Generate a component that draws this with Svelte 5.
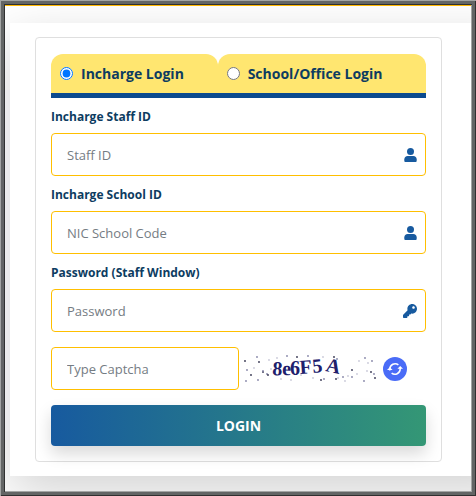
<script>
  let loginType = $state('incharge');

  const tabs = [
    { value: 'incharge', label: 'Incharge Login' },
    { value: 'school', label: 'School/Office Login' }
  ];

  const fields = [
    { id: 'staff-id', label: 'Incharge Staff ID', placeholder: 'Staff ID', type: 'text', icon: 'user' },
    { id: 'school-id', label: 'Incharge School ID', placeholder: 'NIC School Code', type: 'text', icon: 'user' },
    { id: 'password', label: 'Password (Staff Window)', placeholder: 'Password', type: 'password', icon: 'key' }
  ];

  // captcha noise: x, y, tone
  const specks = [
    [1, 6, 0], [3, 15, 1], [7, 20, 0], [2, 26, 1], [13, 2, 1], [15, 7, 0], [19, 17, 0],
    [23, 19, 1], [25, 5, 2], [14, 25, 1], [19, 16, 1], [27, 14, 2], [24, 20, 0], [33, 3, 2],
    [43, 1, 1], [53, 2, 0], [57, 20, 2], [64, 1, 1], [69, 23, 2], [77, 25, 0], [80, 24, 1],
    [79, 2, 2], [90, 2, 0], [93, 4, 1], [92, 24, 0], [94, 23, 2], [99, 22, 1], [104, 21, 2],
    [108, 15, 0], [108, 22, 1], [101, 26, 2], [115, 6, 2], [121, 3, 1], [124, 8, 2],
    [127, 17, 0], [128, 6, 1], [130, 19, 1], [131, 23, 0], [120, 26, 1], [123, 16, 2],
    [10, 13, 2], [37, 24, 2], [47, 25, 2], [113, 19, 2]
  ];
  const tones = ['#34344f', '#8585a8', '#c9c9d8'];
</script>

<div class="frame">
  <div class="page">
    <main class="card">
      <form class="panel" onsubmit={(e) => e.preventDefault()}>
        <div class="tabs">
          {#each tabs as tab}
            <label class="tab">
              <input type="radio" name="login-type" value={tab.value} bind:group={loginType} />
              <span>{tab.label}</span>
            </label>
          {/each}
        </div>

        {#each fields as field}
          <label class="field-label" for={field.id}>{field.label}</label>
          <div class="field">
            <input id={field.id} type={field.type} placeholder={field.placeholder} />
            {#if field.icon === 'user'}
              <svg class="field-icon" viewBox="0 0 14 14" aria-hidden="true">
                <circle cx="7.500" cy="3.6" r="3.5" />
                <path d="M4.700 8h5.600c2 0 3.400 1.500 3.400 3.400v1.300c0 .8-.5 1.300-1.300 1.300H2.600c-.8 0-1.300-.5-1.300-1.300v-1.300C1.300 9.500 2.700 8 4.700 8z" />
              </svg>
            {:else}
              <svg class="field-icon" viewBox="0 0 512 512" aria-hidden="true">
                <path d="M512 176c0 97-79 176-176 176-11 0-22-1-33-3l-24 27c-5 5-11 8-18 8h-37v40c0 13-11 24-24 24h-40v40c0 13-11 24-24 24H24c-13 0-24-11-24-24v-78c0-6 3-12 7-17l162-162c-6-17-9-36-9-55C160 79 239 0 336 0c97 0 176 79 176 176zM336 128c0 27 21 48 48 48s48-21 48-48-21-48-48-48-48 21-48 48z" />
              </svg>
            {/if}
          </div>
        {/each}

        <div class="captcha-row">
          <input type="text" placeholder="Type Captcha" aria-label="Type Captcha" />
          <svg class="captcha" viewBox="0 0 136 28" role="img" aria-label="Captcha">
            {#each specks as [x, y, tone]}
              <circle cx={x + 1} cy={y} r="0.9" fill={tones[tone]} />
            {/each}
            <text class="captcha-text" y="20 20 20 19 18 16" x="29 39 47 57 70 82" rotate="4 2 0 -4 -6 12">8e6F5A</text>
          </svg>
          <button class="refresh" type="button" aria-label="Refresh captcha">
            <svg viewBox="0 0 24 24" aria-hidden="true">
              <circle cx="12" cy="12" r="12" fill="#4a6cf7" />
              <g fill="none" stroke="#fff" stroke-width="1.5">
                <path d="M6.800 13.500v-1.500a5.300 5.300 0 0 1 8.600-4.100" />
                <path d="M17.200 10.500v1.500a5.300 5.300 0 0 1-8.600 4.100" />
              </g>
              <path d="M4 13h5.600L6.800 10.300zM14.400 11.700H20L17.200 9z" fill="#fff" />
            </svg>
          </button>
        </div>

        <button class="login" type="submit">LOGIN</button>
      </form>
    </main>
  </div>
</div>

<style>
  :global(body) {
    margin: 0;
    background: #fff;
  }

  .frame {
    box-sizing: border-box;
    min-height: 100vh;
    padding: 5px;
    display: flex;
    font-family: 'Open Sans', 'Noto Sans', sans-serif;
    font-size: 14px;
    box-shadow:
      inset 1px 1px #a3a5a4,
      inset -1px -1px #303030,
      inset 4px 4px #636565,
      inset -4px -4px #636565,
      inset 5px 5px #303131,
      inset -5px -5px #a3a5a4;
  }

  .page {
    flex: 1;
    min-width: 0;
    border-top: 1px solid #ffb700;
    padding: 17px 0 15px 5px;
    overflow: hidden;
  }

  /* the card runs on past the right edge of the frame */
  .card {
    margin-right: -48px;
    padding: 14px 77px 14px 25px;
    background: #fff;
    box-shadow: 0 16px 48px rgba(0, 0, 0, 0.175);
  }

  .panel {
    padding: 16px 15px 15px;
    border: 1px solid #dfdfdf;
    border-radius: 4px;
  }

  .tabs {
    display: grid;
    grid-template-columns: 4fr 5fr;
    border-bottom: 5px solid #0b4a8f;
  }

  .tab {
    display: flex;
    align-items: center;
    gap: 8px;
    height: 39px;
    padding-left: 9px;
    border-radius: 12px 12px 0 0;
    background: #ffe670;
    color: #0d3c61;
    font-weight: 700;
    white-space: nowrap;
  }

  .tab input {
    width: 13px;
    height: 13px;
    margin: 0;
    accent-color: #0075ff;
  }

  .field-label {
    display: block;
    padding: 9px 0 6px;
    color: #0d3c61;
    font-size: 12px;
    font-weight: 700;
    line-height: 20px;
  }

  .field {
    position: relative;
  }

  .field input,
  .captcha-row input {
    box-sizing: border-box;
    width: 100%;
    height: 43px;
    padding: 0 15px;
    border: 1px solid #ffbf00;
    border-radius: 4px;
    background: #fff;
    color: #212529;
    font: inherit;
    font-size: 13px;
  }

  input::placeholder {
    color: #757c83;
    opacity: 1;
  }

  .field-icon {
    position: absolute;
    top: 15px;
    right: 9px;
    width: 14px;
    height: 14px;
    fill: #175a9f;
  }

  .captcha-row {
    display: flex;
    align-items: center;
    margin: 15px 0;
  }

  .captcha-row input {
    flex: none;
    width: 50%;
  }

  .captcha {
    flex: none;
    width: 136px;
    height: 28px;
    margin: 0 4px;
    overflow: visible;
  }

  .captcha-text {
    font-family: 'Liberation Serif', serif;
    font-size: 20px;
    font-weight: 700;
    fill: #20206c;
  }

  .refresh {
    flex: none;
    padding: 0;
    border: 0;
    background: none;
    cursor: pointer;
  }

  .refresh svg {
    display: block;
    width: 24px;
    height: 24px;
  }

  .login {
    display: block;
    width: 100%;
    height: 41px;
    padding: 0;
    border: 0;
    border-radius: 4px;
    background: linear-gradient(to right, #175a9f, #349775);
    box-shadow: 0 8px 16px rgba(0, 0, 0, 0.15);
    color: #fff;
    font: inherit;
    font-weight: 700;
    cursor: pointer;
  }
</style>
